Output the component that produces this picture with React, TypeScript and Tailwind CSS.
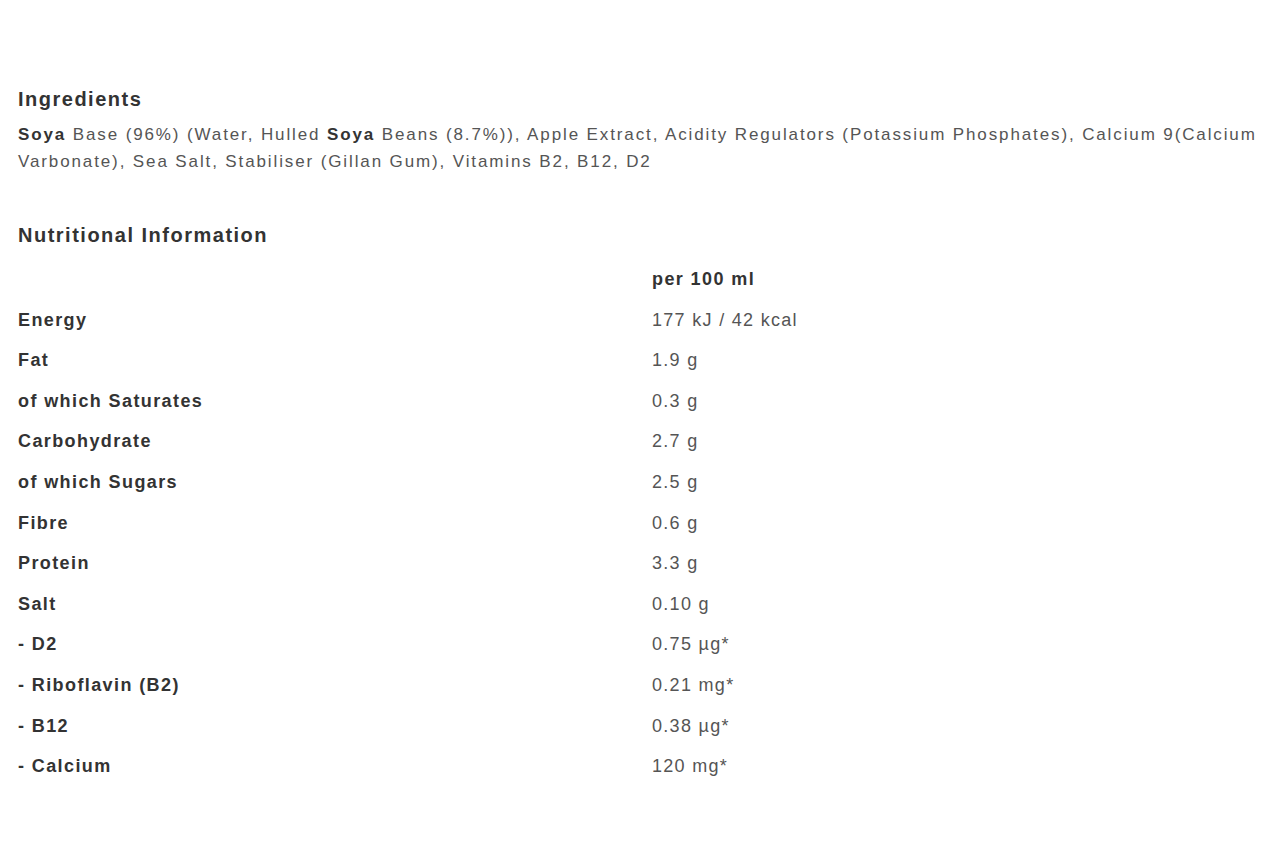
import React from "react";

interface Row {
  label: string;
  value: string;
}

const rows: Row[] = [
  { label: "Energy", value: "177 kJ / 42 kcal" },
  { label: "Fat", value: "1.9 g" },
  { label: "of which Saturates", value: "0.3 g" },
  { label: "Carbohydrate", value: "2.7 g" },
  { label: "of which Sugars", value: "2.5 g" },
  { label: "Fibre", value: "0.6 g" },
  { label: "Protein", value: "3.3 g" },
  { label: "Salt", value: "0.10 g" },
  { label: "- D2", value: "0.75 µg*" },
  { label: "- Riboflavin (B2)", value: "0.21 mg*" },
  { label: "- B12", value: "0.38 µg*" },
  { label: "- Calcium", value: "120 mg*" },
];

const App: React.FC = () => {
  return (
    <div className="min-h-screen bg-white font-['Liberation_Sans',Arial,sans-serif] text-[#555]">
      <div className="px-[18px] pt-[86px]">
        {/* Ingredients */}
        <h2 className="text-[20px] font-bold tracking-[1.5px] text-[#333] leading-[26px]">Ingredients</h2>
        <p className="mt-[9px] text-[17px] tracking-[1.88px] leading-[27px]">
          <span className="font-bold text-[#333]">Soya</span> Base (96%) (Water, Hulled{" "}
          <span className="font-bold text-[#333]">Soya</span> Beans (8.7%)), Apple Extract, Acidity Regulators
          (Potassium Phosphates), Calcium 9(Calcium Varbonate), Sea Salt, Stabiliser (Gillan Gum), Vitamins B2,
          B12, D2
        </p>

        {/* Nutritional Information */}
        <h2 className="mt-[47px] text-[20px] font-bold tracking-[1.5px] text-[#333] leading-[26px]">
          Nutritional Information
        </h2>
        <div className="mt-[11px] grid grid-cols-[634px_1fr] text-[18px]">
          <div className="h-[40.6px] leading-[40.6px]"></div>
          <div className="h-[40.6px] leading-[40.6px] font-bold tracking-[1.4px] text-[#333]">per 100 ml</div>
          {rows.map((row) => (
            <React.Fragment key={row.label}>
              <div className="h-[40.6px] leading-[40.6px] font-bold tracking-[1.4px] text-[#333]">{row.label}</div>
              <div className="h-[40.6px] leading-[40.6px] tracking-[1.3px]">{row.value}</div>
            </React.Fragment>
          ))}
        </div>
      </div>
    </div>
  );
};

export default App;
